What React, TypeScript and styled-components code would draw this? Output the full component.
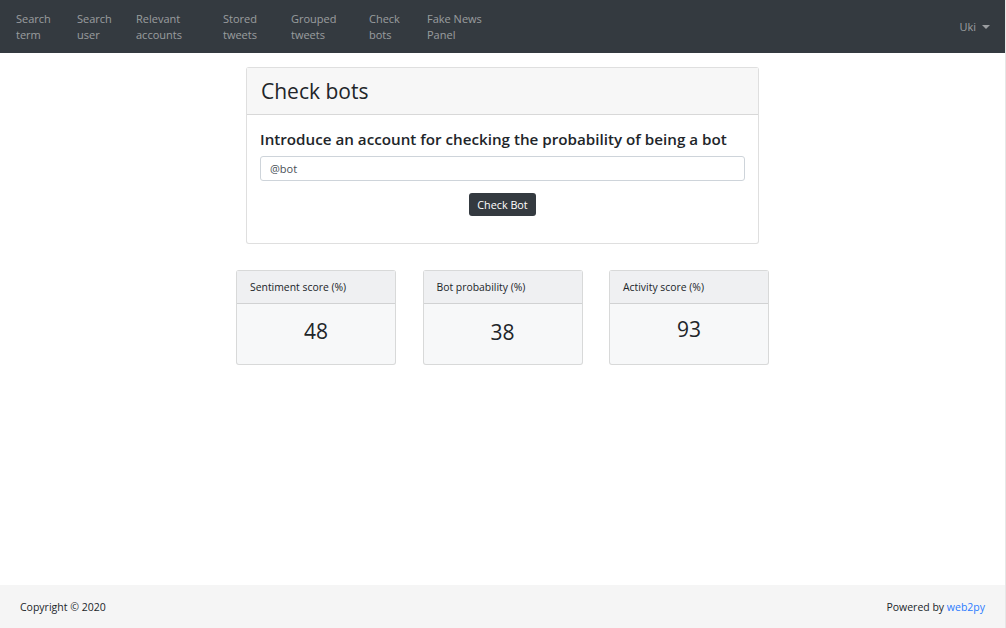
import React from "react";
import styled, { createGlobalStyle } from "styled-components";

const Global = createGlobalStyle`
  html, body { margin: 0; padding: 0; }
  body {
    font-family: "Open Sans", "Noto Sans", "Liberation Sans", sans-serif;
    color: #212529;
    background: #fff;
  }
  * { box-sizing: border-box; }
`;

const Page = styled.div`
  min-height: 628px;
  display: flex;
  flex-direction: column;
  border-right: 1px solid #e6e6e6;
`;

const Nav = styled.nav`
  height: 53px;
  background: #343a40;
  display: flex;
  align-items: center;
  padding: 0 0 0 16px;
`;

const NavItem = styled.a<{ $w: number }>`
  width: ${(p) => p.$w}px;
  font-size: 11px;
  line-height: 16px;
  color: rgba(255, 255, 255, 0.5);
  text-decoration: none;
  padding-right: 8px;
  margin-top: 1px;
`;

const Spacer = styled.div`
  flex: 1;
`;

const User = styled.div`
  font-size: 11px;
  color: rgba(255, 255, 255, 0.5);
  display: flex;
  align-items: center;
  gap: 6px;
  margin-right: 15px;
  &::after {
    content: "";
    border-top: 4px solid rgba(255, 255, 255, 0.5);
    border-left: 4px solid transparent;
    border-right: 4px solid transparent;
  }
`;

const Main = styled.main`
  flex: 1;
  display: flex;
  flex-direction: column;
  align-items: center;
  padding-top: 14px;
`;

const Card = styled.section`
  width: 513px;
  border: 1px solid rgba(0, 0, 0, 0.125);
  border-radius: 3px;
  background: #fff;
`;

const CardHeader = styled.div`
  height: 47px;
  background: #f7f7f7;
  border-bottom: 1px solid rgba(0, 0, 0, 0.125);
  padding: 0 14px;
  display: flex;
  align-items: center;
`;

const Title = styled.h2`
  margin: 0 0 1px;
  font-size: 21px;
  font-weight: 500;
  color: #212529;
`;

const CardBody = styled.div`
  padding: 13px 13px 27px;
  display: flex;
  flex-direction: column;
`;

const Subtitle = styled.h3`
  margin: 0 0 6px;
  font-size: 15.2px;
  font-weight: 600;
  line-height: 22px;
  color: #212529;
`;

const Input = styled.input`
  height: 25px;
  width: 100%;
  border: 1px solid #ced4da;
  border-radius: 3px;
  padding: 0 9px;
  font-family: inherit;
  font-size: 11px;
  color: #495057;
`;

const Button = styled.button`
  align-self: center;
  margin-top: 12px;
  height: 23px;
  padding: 0 8px;
  background: #343a40;
  color: #fff;
  border: none;
  border-radius: 3px;
  font-family: inherit;
  font-size: 10.8px;
`;

const Stats = styled.div`
  margin-top: 26px;
  display: flex;
  gap: 26.5px;
`;

const StatCard = styled.div`
  width: 160px;
  height: 95px;
  border: 1px solid rgba(0, 0, 0, 0.125);
  border-radius: 3px;
  background: #f7f8f9;
  display: flex;
  flex-direction: column;
`;

const StatHeader = styled.div`
  height: 33px;
  background: #eff0f2;
  border-bottom: 1px solid rgba(0, 0, 0, 0.125);
  padding: 0 13px;
  font-size: 10.4px;
  display: flex;
  align-items: center;
`;

const StatValue = styled.div<{ $off: number }>`
  flex: 1;
  display: flex;
  justify-content: center;
  align-items: flex-start;
  padding-top: ${(p) => p.$off}px;
  font-size: 21px;
  font-weight: 500;
`;

const Footer = styled.footer`
  height: 43px;
  background: #f5f5f5;
  display: flex;
  align-items: center;
  justify-content: space-between;
  padding: 0 20px;
  font-size: 10.5px;
  color: #212529;
`;

const Link = styled.a`
  color: #2b7bff;
  text-decoration: none;
`;

const navItems: [string, number][] = [
  ["Search term", 61],
  ["Search user", 59],
  ["Relevant accounts", 87],
  ["Stored tweets", 68],
  ["Grouped tweets", 78],
  ["Check bots", 58],
  ["Fake News Panel", 80],
];

const stats: [string, string, number][] = [
  ["Sentiment score (%)", "48", 13],
  ["Bot probability (%)", "38", 14],
  ["Activity score (%)", "93", 11],
];

export default function App() {
  return (
    <Page>
      <Global />
      <Nav>
        {navItems.map(([label, w]) => (
          <NavItem key={label} $w={w} href="#">
            {label}
          </NavItem>
        ))}
        <Spacer />
        <User>Uki</User>
      </Nav>
      <Main>
        <Card>
          <CardHeader>
            <Title>Check bots</Title>
          </CardHeader>
          <CardBody>
            <Subtitle>Introduce an account for checking the probability of being a bot</Subtitle>
            <Input defaultValue="@bot" />
            <Button>Check Bot</Button>
          </CardBody>
        </Card>
        <Stats>
          {stats.map(([label, value, off]) => (
            <StatCard key={label}>
              <StatHeader>{label}</StatHeader>
              <StatValue $off={off}>{value}</StatValue>
            </StatCard>
          ))}
        </Stats>
      </Main>
      <Footer>
        <span>Copyright © 2020</span>
        <span>
          Powered by <Link href="#">web2py</Link>
        </span>
      </Footer>
    </Page>
  );
}
